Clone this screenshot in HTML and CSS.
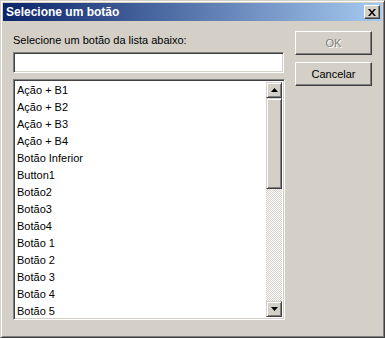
FILE: index.html
```html
<!DOCTYPE html>
<html lang="pt">
<head>
  <meta charset="UTF-8" />
  <title>Selecione um botão</title>
  <link rel="stylesheet" href="styles.css">
</head>
<body>

  <div class="window">
    <div class="titlebar">
      <span class="title">Selecione um botão</span>
      <button class="close-btn" aria-label="Fechar">
        <svg width="8" height="7" viewBox="0 0 8 7">
          <path d="M0 0h2l2 2.5L6 0h2L5 3.5 8 7H6L4 4.5 2 7H0l3-3.5z" fill="#000"/>
        </svg>
      </button>
    </div>

    <div class="content">
      <div class="main-col">
        <label class="prompt" for="filterInput">Selecione um botão da lista abaixo:</label>
        <input type="text" id="filterInput" class="field" />

        <div class="listbox">
          <ul class="items">
            <li>Ação + B1</li>
            <li>Ação + B2</li>
            <li>Ação + B3</li>
            <li>Ação + B4</li>
            <li>Botão Inferior</li>
            <li>Button1</li>
            <li>Botão2</li>
            <li>Botão3</li>
            <li>Botão4</li>
            <li>Botão 1</li>
            <li>Botão 2</li>
            <li>Botão 3</li>
            <li>Botão 4</li>
            <li>Botão 5</li>
          </ul>
          <div class="scrollbar">
            <div class="sb-btn">
              <svg width="7" height="4" viewBox="0 0 7 4"><path d="M3.5 0L7 4H0z" fill="#000"/></svg>
            </div>
            <div class="sb-thumb"></div>
            <div class="sb-track"></div>
            <div class="sb-btn">
              <svg width="7" height="4" viewBox="0 0 7 4"><path d="M0 0h7L3.5 4z" fill="#000"/></svg>
            </div>
          </div>
        </div>
      </div>

      <div class="side-col">
        <button class="btn" disabled>OK</button>
        <button class="btn">Cancelar</button>
      </div>
    </div>
  </div>

</body>
</html>
```

FILE: styles.css
```css
:root {
  --face: #d4d0c8;
  --light: #fff;
  --shadow: #808080;
  --dark: #404040;
}

body {
  margin: 0;
  font-family: Tahoma, 'Liberation Sans', Arial, sans-serif;
  font-size: 11px;
  background: var(--face);
}

.window {
  width: 385px;
  height: 338px;
  box-sizing: border-box;
  padding: 2px;
  background: var(--face);
  border: 1px solid;
  border-color: var(--face) var(--dark) var(--dark) var(--face);
  box-shadow: inset 1px 1px var(--light), inset -1px -1px var(--shadow);
  display: flex;
  flex-direction: column;
}

.titlebar {
  height: 18px;
  display: flex;
  align-items: center;
  justify-content: space-between;
  padding: 0 2px 0 3px;
  background: linear-gradient(to right, #0a246a, #a6caf0);
}

.title {
  color: #fff;
  font-weight: bold;
  font-size: 12px;
}

.close-btn {
  width: 16px;
  height: 14px;
  padding: 0;
  border: 1px solid;
  border-color: var(--light) var(--dark) var(--dark) var(--light);
  box-shadow: inset -1px -1px var(--shadow);
  background: var(--face);
  display: flex;
  align-items: center;
  justify-content: center;
}

.content {
  flex: 1;
  display: flex;
  padding: 9px 10px 0 10px;
  gap: 10px;
}

.main-col {
  width: 272px;
  display: flex;
  flex-direction: column;
}

.prompt {
  height: 13px;
  line-height: 13px;
  margin: 4px 0 0 0;
  color: #000;
}

.field {
  margin: 5px 0 0 0;
  height: 21px;
  box-sizing: border-box;
  width: 271px;
  padding: 0 3px;
  font: inherit;
  background: #fff;
  border: 1px solid;
  border-color: var(--shadow) var(--light) var(--light) var(--shadow);
  box-shadow: inset 1px 1px var(--dark), inset -1px -1px var(--face);
  outline: none;
}

.listbox {
  margin-top: 6px;
  height: 241px;
  box-sizing: border-box;
  display: flex;
  background: #fff;
  border: 1px solid;
  border-color: var(--shadow) var(--light) var(--light) var(--shadow);
  box-shadow: inset 1px 1px var(--dark), inset -1px -1px var(--face);
  padding: 2px;
}

.items {
  flex: 1;
  list-style: none;
  margin: 0;
  padding: 0 0 0 1px;
  overflow: hidden;
}

.items li {
  height: 17px;
  line-height: 17px;
  color: #000;
  white-space: nowrap;
}

.scrollbar {
  width: 16px;
  display: flex;
  flex-direction: column;
}

.sb-btn,
.sb-thumb {
  box-sizing: border-box;
  background: var(--face);
  border: 1px solid;
  border-color: var(--face) var(--dark) var(--dark) var(--face);
  box-shadow: inset 1px 1px var(--light), inset -1px -1px var(--shadow);
}

.sb-btn {
  height: 16px;
  display: flex;
  align-items: center;
  justify-content: center;
}

.sb-thumb {
  height: 91px;
}

.sb-track {
  flex: 1;
  background-color: #fff;
  background-image: conic-gradient(var(--face) 25%, #fff 0 50%, var(--face) 0 75%, #fff 0);
  background-size: 2px 2px;
}

.side-col {
  display: flex;
  flex-direction: column;
  gap: 7px;
  padding-top: 1px;
}

.btn {
  width: 77px;
  height: 24px;
  box-sizing: border-box;
  font: inherit;
  color: #000;
  background: var(--face);
  border: 1px solid;
  border-color: var(--light) var(--dark) var(--dark) var(--light);
  box-shadow: inset -1px -1px var(--shadow);
  padding: 0;
}

.btn:disabled {
  color: #808080;
  text-shadow: 1px 1px #fff;
}
```
